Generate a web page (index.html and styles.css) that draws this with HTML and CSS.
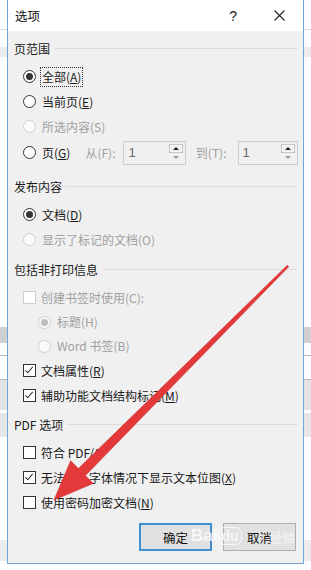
FILE: index.html
```html
<!DOCTYPE html>
<html lang="zh-CN">
  <head>
    <meta charset="UTF-8" />
    <meta name="viewport" content="width=device-width, initial-scale=1.0" />
    <title>选项</title>
    <link rel="stylesheet" href="styles.css">
  </head>
  <body>
    <div class="dialog">
      <div class="titlebar">
        <span class="title">选项</span>
        <span class="help">?</span>
        <svg class="close" width="11" height="11" viewBox="0 0 11 11">
          <path d="M0.5 0.5 L10.5 10.5 M10.5 0.5 L0.5 10.5" stroke="#222" stroke-width="1.1" fill="none" />
        </svg>
      </div>

      <div class="content">
        <div class="group-title"><span>页范围</span></div>
        <div class="opt"><span class="radio checked"></span><span class="label focus">全部(<u>A</u>)</span></div>
        <div class="opt"><span class="radio"></span><span class="label">当前页(<u>E</u>)</span></div>
        <div class="opt disabled"><span class="radio"></span><span class="label">所选内容(S)</span></div>
        <div class="opt page-row">
          <span class="radio"></span><span class="label">页(<u>G</u>)</span>
          <span class="label muted from">从(F):</span>
          <div class="spin spin-from">
            <span class="spin-value">1</span>
            <span class="spin-btns"><span class="spin-up"></span><span class="spin-down"></span></span>
          </div>
          <span class="label muted to">到(T):</span>
          <div class="spin spin-to">
            <span class="spin-value">1</span>
            <span class="spin-btns"><span class="spin-up"></span><span class="spin-down"></span></span>
          </div>
        </div>

        <div class="group-title g2"><span>发布内容</span></div>
        <div class="opt"><span class="radio checked"></span><span class="label">文档(<u>D</u>)</span></div>
        <div class="opt disabled"><span class="radio"></span><span class="label">显示了标记的文档(O)</span></div>

        <div class="group-title g3"><span>包括非打印信息</span></div>
        <div class="opt disabled"><span class="check"></span><span class="label">创建书签时使用(C):</span></div>
        <div class="opt sub disabled"><span class="radio checked"></span><span class="label">标题(H)</span></div>
        <div class="opt sub disabled"><span class="radio"></span><span class="label">Word 书签(B)</span></div>
        <div class="opt"><span class="check checked"></span><span class="label">文档属性(<u>R</u>)</span></div>
        <div class="opt"><span class="check checked"></span><span class="label">辅助功能文档结构标记(<u>M</u>)</span></div>

        <div class="group-title g4"><span>PDF 选项</span></div>
        <div class="opt"><span class="check"></span><span class="label">符合 PDF/A</span></div>
        <div class="opt"><span class="check checked"></span><span class="label">无法嵌入字体情况下显示文本位图(<u>X</u>)</span></div>
        <div class="opt"><span class="check"></span><span class="label">使用密码加密文档(<u>N</u>)</span></div>

        <div class="actions">
          <button class="btn btn-default">确定</button>
          <button class="btn">取消</button>
        </div>
      </div>
    </div>

    <div class="watermark"><span class="wm-bai">Bai</span><span class="wm-du">du</span><span class="wm-jy">经验</span></div>

    <svg class="arrow" width="311" height="570" viewBox="0 0 311 570">
      <polygon points="287.3,265.3 78.4,468.6 70.6,460.8 54,500 93.2,483.4 85.4,475.6 288.7,266.7" fill="#e3393a" stroke="#d02f30" stroke-width="0.6" />
    </svg>
  </body>
</html>
```

FILE: styles.css
```css
/* Página de fondo y diálogo */
html,
body {
  height: 570px;
  overflow: hidden;
}

body {
  margin: 0;
  font-family: "Noto Sans CJK SC", "Noto Sans", sans-serif;
  color: #1a1a1a;
  background: linear-gradient(
    to bottom,
    #fff 0 29px,
    #d9d9d9 29px 30px,
    #fff 30px 47px,
    #ececec 47px 57px,
    #fff 57px 327px,
    #cfcfcf 327px 343px,
    #fff 343px 355px,
    #b5b5b5 355px 356px,
    #fff 356px 379px,
    #b5b5b5 379px 380px,
    #e4e4e4 380px 410px,
    #fff 410px 413px,
    #e6e6e6 413px 437px,
    #fff 437px 540px,
    #ececec 540px 561px,
    #fff 561px
  );
  position: relative;
}

.dialog {
  margin-left: 7px;
  width: 295px;
  height: 563px;
  border: 1px solid #6fa6d6;
  border-top: none;
  background-color: #f0f0f0;
  display: flex;
  flex-direction: column;
}

.titlebar {
  height: 31px;
  background-color: #fff;
  display: flex;
  align-items: center;
  padding-left: 7px;
  font-size: 12.5px;
  flex-shrink: 0;
}

.title {
  flex: 1;
  color: #111;
}

.help {
  font-family: "Liberation Sans", sans-serif;
  font-size: 14px;
  margin-right: 37px;
  color: #222;
}

.close {
  margin-right: 18px;
}

.content {
  padding: 9px 5px 0 6px;
  font-size: 12px;
}

.group-title {
  display: flex;
  align-items: center;
  gap: 4px;
  height: 16px;
  margin-bottom: 8px;
  font-size: 12px;
}

.group-title::after {
  content: "";
  flex: 1;
  border-top: 1px solid #dcdcdc;
}

.g2 {
  margin-top: 12px;
}

.g3 {
  margin-top: 9px;
}

.g4 {
  margin-top: 8px;
  margin-bottom: 8px;
}

.opt {
  display: flex;
  align-items: center;
  height: 25px;
  padding-left: 9px;
  gap: 5px;
}

.opt.sub {
  height: 24px;
  padding-left: 24px;
}

.label {
  white-space: nowrap;
  line-height: 18px;
  padding: 0 1px;
}

.label u {
  text-underline-offset: 1px;
}

.focus {
  outline: 1px dotted #333;
  outline-offset: 0;
}

.disabled .label,
.muted {
  color: #a0a0a0;
}

/* Radios */
.radio {
  width: 11px;
  height: 11px;
  border: 1px solid #333;
  border-radius: 50%;
  background-color: #fff;
  position: relative;
  flex-shrink: 0;
}

.radio.checked::after {
  content: "";
  position: absolute;
  left: 2px;
  top: 2px;
  width: 7px;
  height: 7px;
  border-radius: 50%;
  background-color: #333;
}

.disabled .radio {
  border-color: #cfcfcf;
  background-color: #fafafa;
}

.disabled .radio.checked::after {
  background-color: #bdbdbd;
}

/* Casillas */
.check {
  width: 11px;
  height: 11px;
  border: 1px solid #333;
  background-color: #fff;
  position: relative;
  flex-shrink: 0;
  margin-right: -1px;
}

.check.checked::after {
  content: "";
  position: absolute;
  left: 3px;
  top: 0px;
  width: 3px;
  height: 7px;
  border-right: 1.3px solid #333;
  border-bottom: 1.3px solid #333;
  transform: rotate(40deg);
}

.disabled .check {
  border-color: #cfcfcf;
}

/* Fila de páginas */
.page-row {
  height: 27px;
  gap: 0;
}

.page-row .radio {
  margin-right: 5px;
}

.from {
  margin-left: 13px;
}

.to {
  margin-left: 9px;
}

.spin {
  height: 24px;
  border: 1px solid #cdcdcd;
  background-color: #f0f0f0;
  display: flex;
  align-items: center;
  justify-content: space-between;
  box-sizing: border-box;
}

.spin-from {
  width: 66px;
  margin-left: 7px;
}

.spin-to {
  width: 64px;
  margin-left: 10px;
}

.spin-value {
  padding-left: 4px;
  color: #6a6a6a;
  font-family: "Liberation Sans", sans-serif;
  font-size: 13px;
}

.spin-btns {
  display: flex;
  flex-direction: column;
  margin-right: 2px;
}

.spin-up,
.spin-down {
  width: 14px;
  height: 9px;
  position: relative;
  box-sizing: border-box;
}

.spin-up {
  border: 1px solid #c4c4c4;
  background-color: #f2f2f2;
}

.spin-up::after,
.spin-down::after {
  content: "";
  position: absolute;
  left: 3px;
  border-left: 3px solid transparent;
  border-right: 3px solid transparent;
}

.spin-up::after {
  top: 2px;
  border-bottom: 3px solid #222;
}

.spin-down::after {
  top: 3px;
  left: 4px;
  border-top: 3px solid #9a9a9a;
}

/* Botones */
.actions {
  display: flex;
  justify-content: flex-end;
  gap: 11px;
  margin-top: 8px;
  padding-right: 2px;
}

.btn {
  width: 73px;
  height: 28px;
  font-family: "Noto Sans CJK SC", sans-serif;
  font-size: 12.5px;
  color: #111;
  background-color: #e1e1e1;
  border: 1px solid #adadad;
  padding: 0;
}

.btn-default {
  border: 2px solid #3f8fd2;
}

/* Marca de agua */
.watermark {
  position: absolute;
  left: 191px;
  top: 526px;
  font-family: "Liberation Sans", sans-serif;
  font-weight: bold;
  font-size: 17px;
  color: rgba(255, 255, 255, 0.75);
  display: flex;
  align-items: center;
  gap: 1px;
}

.wm-du {
  border: 1px solid rgba(255, 255, 255, 0.7);
  border-radius: 6px;
  padding: 0 2px;
  font-size: 14px;
}

.wm-jy {
  margin-left: 26px;
  font-size: 13px;
  color: rgba(255, 255, 255, 0.5);
}

.arrow {
  position: absolute;
  left: 0;
  top: 0;
  pointer-events: none;
}
```
